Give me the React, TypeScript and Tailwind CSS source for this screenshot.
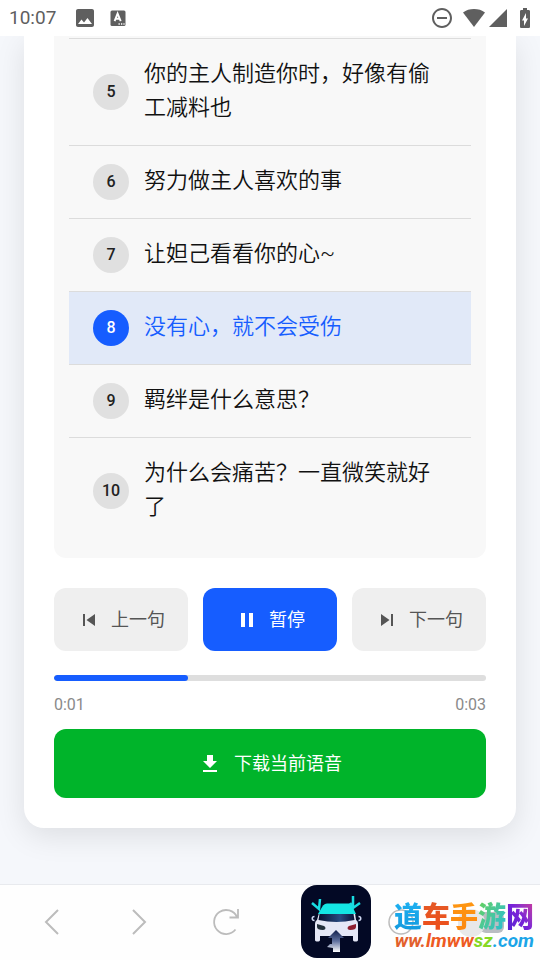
import clsx from "clsx"
import { MdBatteryChargingFull, MdImage, MdRemoveCircleOutline } from "react-icons/md"

const lines = [
  { id: 5, text: "你的主人制造你时，好像有偷工减料也" },
  { id: 6, text: "努力做主人喜欢的事" },
  { id: 7, text: "让妲己看看你的心~" },
  { id: 8, text: "没有心，就不会受伤" },
  { id: 9, text: "羁绊是什么意思？" },
  { id: 10, text: "为什么会痛苦？一直微笑就好了" },
]

function StatusBar() {
  return (
    <header className="flex h-9 items-center justify-between bg-white pl-[9px] pr-[3px] text-[#5f5f5f]">
      <div className="flex items-center">
        <time className="text-[19px] leading-6">10:07</time>
        <MdImage className="ml-[17px] size-6" />
        <svg viewBox="0 0 24 24" className="ml-[9px] size-6" aria-hidden="true">
          <rect x="4.5" y="4.5" width="15" height="15.5" rx="1.5" fill="currentColor" />
          <path d="M8.6 15.2 11.6 7.6 14.7 15.2M9.7 12.7h3.9" fill="none" stroke="#fff" strokeWidth="1.9" />
          <path d="M12.5 18h1.3M15 18h1.3M17.4 18h1.2" stroke="#fff" strokeWidth="1.3" />
        </svg>
      </div>
      <div className="flex items-center">
        <MdRemoveCircleOutline className="size-6" />
        <svg viewBox="0 0 24 20" className="ml-2 h-5 w-6" aria-hidden="true">
          <path d="M1 4.5C4 2 8 1 12 1s8 1 11 3.5L12 19z" fill="currentColor" />
        </svg>
        <svg viewBox="0 0 20 20" className="ml-0.5 size-5" aria-hidden="true">
          <path d="M19 1v18H1z" fill="currentColor" />
        </svg>
        <MdBatteryChargingFull className="ml-[5px] size-6" />
      </div>
    </header>
  )
}

function LineItem({ id, text, active }: { id: number; text: string; active: boolean }) {
  return (
    <li
      className={clsx(
        "flex items-center gap-[15px] border-b border-[#dcdcdc] px-6 py-[18px] last:border-b-0",
        active ? "bg-[#e1e9f8] text-[#165dff]" : "text-[#111]",
      )}
    >
      <span
        className={clsx(
          "flex size-9 shrink-0 items-center justify-center rounded-full text-base font-medium",
          active ? "bg-[#165dff] text-white" : "bg-[#e0e0e0] text-[#222]",
        )}
      >
        {id}
      </span>
      <p className="pb-0.5 font-[Roboto,'Noto_Sans_CJK_SC_DemiLight','Noto_Sans_CJK_SC',sans-serif] text-[22px] font-light leading-[34px]">
        {text}
      </p>
    </li>
  )
}

function Controls() {
  const base = "flex h-[63px] flex-1 items-center justify-center gap-2.5 rounded-xl text-lg"
  return (
    <div className="mt-[30px] flex gap-[15px]">
      <button type="button" className={clsx(base, "bg-[#efefef] text-[#555]")}>
        <svg viewBox="0 0 24 24" className="size-6 fill-current" aria-hidden="true">
          <path d="M6 6h2v12H6zm3.5 6 8.5 6V6z" />
        </svg>
        上一句
      </button>
      <button type="button" className={clsx(base, "bg-[#165dff] text-white")}>
        <svg viewBox="0 0 24 24" className="size-6 fill-current" aria-hidden="true">
          <path d="M6 19h4V5H6zm8-14v14h4V5z" />
        </svg>
        暂停
      </button>
      <button type="button" className={clsx(base, "bg-[#efefef] text-[#555]")}>
        <svg viewBox="0 0 24 24" className="size-6 fill-current" aria-hidden="true">
          <path d="m6 18 8.5-6L6 6zM16 6v12h2V6z" />
        </svg>
        下一句
      </button>
    </div>
  )
}

function Progress({ value }: { value: number }) {
  return (
    <div className="mt-6">
      <div
        role="progressbar"
        aria-label="播放进度"
        aria-valuenow={value}
        className="h-1.5 overflow-hidden rounded-full bg-[#dedede]"
      >
        <div className="h-full rounded-full bg-[#165dff]" style={{ width: `${value}%` }} />
      </div>
      <div className="mt-3 flex justify-between text-base leading-6 text-[#8a8a8a]">
        <span>0:01</span>
        <span>0:03</span>
      </div>
    </div>
  )
}

function CarLogo() {
  return (
    <svg viewBox="0 0 70 73" className="h-[73px] w-[70px]" aria-hidden="true">
      <defs>
        <linearGradient id="glass" x1="0" y1="0" x2="1" y2="0">
          <stop offset="0" stopColor="#07102f" />
          <stop offset="0.6" stopColor="#284a80" />
          <stop offset="1" stopColor="#0a1236" />
        </linearGradient>
        <linearGradient id="road" x1="0" y1="0" x2="0" y2="1">
          <stop offset="0" stopColor="#101d4a" />
          <stop offset="0.5" stopColor="#5e6f9e" />
          <stop offset="1" stopColor="#fff" />
        </linearGradient>
      </defs>
      <rect width="70" height="73" rx="16" fill="#030925" />
      <path
        d="M18 28h36l1 7c2 1 2 3 2 6v14c0 2-5 2-5 0v-4H19v4c0 2-5 2-5 0V41c0-3 0-5 2-6z"
        fill="#e4e7f6"
      />
      <path d="M26 18.5h22q2 0 3 2l4 8.500H17l5-8.500q2-2 4-2z" fill="#14e6e4" />
      <path d="M18.5 29h34l1 6q-18 4-36 0z" fill="url(#glass)" />
      <path d="M16 39l7 2c2 1 2 4-1 4-4 0-6-1-6-3z" fill="#22303c" />
      <path d="M55 39l-7 2c-2 1-2 4 1 4 4 0 6-1 6-3z" fill="#8f2030" />
      <path d="M13.5 31.5c-3 0-3 4 0 4M57.5 31.5c3 0 3 4 0 4" fill="none" stroke="#cfd8f2" strokeWidth="1.5" />
      <path d="M35 45 43 53h-4v14h-7v-4l-6-1 3-3h2v-6h-4z" fill="url(#road)" />
      <path
        d="M11 18l7 6 1-10M49 18l3 5 7-5M52 23V11"
        fill="none"
        stroke="#18dce2"
        strokeWidth="2.5"
      />
    </svg>
  )
}

function BrowserNav() {
  const item = "flex h-full flex-1 items-center justify-center"
  return (
    <nav className="relative h-[76px] border-t border-[#e8eaee] bg-[#fefefe] px-2 text-[#bcbcbc]">
      <div className="grid h-[74px] grid-cols-6 items-center">
        <button type="button" aria-label="后退" className={item}>
          <svg viewBox="0 0 30 30" className="size-[30px]" fill="none" stroke="currentColor" strokeWidth="2">
            <path d="M21 3 9 15l12 12" />
          </svg>
        </button>
        <button type="button" aria-label="前进" className={item}>
          <svg viewBox="0 0 30 30" className="size-[30px]" fill="none" stroke="currentColor" strokeWidth="2">
            <path d="m9 3 12 12L9 27" />
          </svg>
        </button>
        <button type="button" aria-label="刷新" className={item}>
          <svg viewBox="0 0 30 30" className="size-[30px]" fill="none" stroke="currentColor" strokeWidth="1.8">
            <path d="M27 2v8.5h-8.5M26 10A12 12 0 1 0 24.5 22.5" />
          </svg>
        </button>
        <span />
        <button type="button" aria-label="主页" className={item}>
          <svg viewBox="0 0 30 30" className="size-[30px]" fill="none" stroke="currentColor" strokeWidth="1.5">
            <circle cx="15" cy="15" r="12" />
          </svg>
        </button>
        <button type="button" aria-label="菜单" className={item}>
          <svg viewBox="0 0 60 30" className="h-[30px] w-[60px]">
            <rect x="22" y="5" width="24" height="21" rx="6" fill="#b9bdc2" />
            <circle cx="13" cy="16" r="14" fill="#e8e8e9" />
          </svg>
        </button>
      </div>
      <div className="absolute right-[169px] top-0">
        <CarLogo />
      </div>
      <div className="absolute right-1.5 top-3.5 whitespace-nowrap text-right">
        <p className="font-['Noto_Sans_CJK_SC',sans-serif] text-[28px] font-black leading-8">
          <span className="bg-linear-to-b from-[#20b6f5] to-[#1296dc] bg-clip-text text-transparent">道</span>
          <span className="bg-linear-to-b from-[#e35c28] to-[#ee4c18] bg-clip-text text-transparent">车</span>
          <span className="bg-linear-to-b from-[#ff9a12] to-[#fb8510] bg-clip-text text-transparent">手</span>
          <span className="bg-linear-to-br from-[#6bd23b] to-[#1fb8dc] bg-clip-text text-transparent">游</span>
          <span className="bg-linear-to-bl from-[#e02a8a] via-[#7a22d8] to-[#4a20d0] bg-clip-text text-transparent">网</span>
        </p>
        <p className="text-[19px] font-bold italic leading-5">
          <span className="text-[#e2602c]">ww.</span>
          <span className="text-[#ee5a22]">lmww</span>
          <span className="text-[#86d824]">sz</span>
          <span className="text-[#1ba5e8]">.com</span>
        </p>
      </div>
    </nav>
  )
}

export default function App() {
  return (
    <div
      lang="zh-CN"
      className="flex min-h-screen flex-col bg-[#f5f7fb] font-[Roboto,'Noto_Sans_CJK_SC',sans-serif]"
    >
      <StatusBar />
      <main className="flex-1 overflow-hidden px-6 pb-14">
        <section className="rounded-b-[20px] bg-white px-[30px] pb-[30px] shadow-[0_8px_30px_rgba(0,0,0,0.1)]">
          <div className="rounded-b-xl bg-[#f8f8f8] px-[15px] pb-3.5 pt-0.5">
            <ol className="border-t border-[#dcdcdc]">
              {lines.map((line) => (
                <LineItem key={line.id} id={line.id} text={line.text} active={line.id === 8} />
              ))}
            </ol>
          </div>
          <Controls />
          <Progress value={31} />
          <button
            type="button"
            className="mt-3 flex h-[69px] w-full items-center justify-center gap-3 rounded-xl bg-[#00b42a] text-lg text-white"
          >
            <svg viewBox="0 0 24 24" className="size-6 fill-current" aria-hidden="true">
              <path d="M19 9h-4V3H9v6H5l7 7zM5 18v2h14v-2z" />
            </svg>
            下载当前语音
          </button>
        </section>
      </main>
      <BrowserNav />
    </div>
  )
}
